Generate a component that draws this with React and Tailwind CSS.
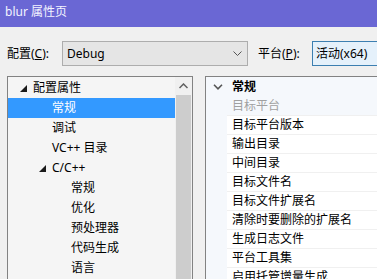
const tree = [
  { label: "配置属性", level: 0, expanded: true },
  { label: "常规", level: 1, selected: true },
  { label: "调试", level: 1 },
  { label: "VC++ 目录", level: 1 },
  { label: "C/C++", level: 1, expanded: true },
  { label: "常规", level: 2 },
  { label: "优化", level: 2 },
  { label: "预处理器", level: 2 },
  { label: "代码生成", level: 2 },
  { label: "语言", level: 2 },
]

const props = [
  "目标平台版本",
  "输出目录",
  "中间目录",
  "目标文件名",
  "目标文件扩展名",
  "清除时要删除的扩展名",
  "生成日志文件",
  "平台工具集",
  "启用托管增量生成",
]

const Expanded = () => (
  <svg width="7" height="7" viewBox="0 0 7 7">
    <polygon points="7,0 7,7 0,7" fill="#1a1a1a" />
  </svg>
)

const indent = ["pl-[12px]", "pl-[31px]", "pl-[50px]"]

const App = () => {
  return (
    <div
      className="w-[377px] h-[279px] overflow-hidden bg-[#f0f0f0] text-[12px] text-black whitespace-nowrap"
      style={{ fontFamily: '"Noto Sans", "Noto Sans CJK SC", sans-serif' }}
    >
      <div className="h-[27px] bg-[#6a67d4] pl-[5px] pt-[4px] text-[#f4f4ff] leading-[16px]">blur 属性页</div>

      <div className="mt-[14px] flex h-[25px] items-center pl-[7px]">
        <span className="w-[55px] shrink-0">配置(<u>C</u>):</span>
        <div className="flex h-[25px] w-[186px] shrink-0 items-center justify-between border border-[#adadad] bg-[#e5e5e5] pl-[4px] pr-[5px]">
          <span>Debug</span>
          <svg width="9" height="6" viewBox="0 0 9 6">
            <polyline points="0.5,0.5 4.5,4.5 8.5,0.5" fill="none" stroke="#555" strokeWidth="1" />
          </svg>
        </div>
        <span className="ml-[10px] w-[54px] shrink-0">平台(<u>P</u>):</span>
        <div className="flex h-[25px] w-[90px] shrink-0 items-center border border-[#3c7fb1] bg-[#e5f1fb] pl-[3px]">
          活动(x64)
        </div>
      </div>

      <div className="mt-[10px] flex pl-[7px]">
        <div className="flex h-[210px] w-[186px] shrink-0 border border-[#828282] bg-[#f5f5f5]">
          <div className="flex-1 pt-[1px]">
            {tree.map((item, i) => (
              <div
                key={i}
                className={`flex h-[20px] items-center ${indent[item.level]} ${item.selected ? "bg-[#3399ff] text-white" : ""}`}
              >
                <span className="flex w-[13px] shrink-0 items-center">{item.expanded && <Expanded />}</span>
                <span>{item.label}</span>
              </div>
            ))}
          </div>
          <div className="flex w-[17px] flex-col bg-[#f0f0f0]">
            <div className="flex h-[18px] items-center justify-center">
              <svg width="9" height="6" viewBox="0 0 9 6">
                <polyline points="0.5,5 4.5,1 8.5,5" fill="none" stroke="#606060" strokeWidth="1.5" />
              </svg>
            </div>
            <div className="mx-[1px] flex-1 bg-[#cdcdcd]" />
          </div>
        </div>

        <div className="ml-[12px] h-[210px] flex-1 border-l border-t border-[#828282] bg-[#f5f8fc]">
          <div className="flex h-[19px] items-center pl-[7px]">
            <svg width="10" height="6" viewBox="0 0 10 6">
              <polyline points="1,0.8 5,4.8 9,0.8" fill="none" stroke="#555" strokeWidth="1.6" />
            </svg>
            <span className="ml-[9px] font-bold">常规</span>
          </div>
          <div className="flex h-[19px] items-center pl-[26px] text-[#a0a0a0]">目标平台</div>
          {props.map((p, i) => (
            <div key={i} className="ml-[21px] flex h-[19px] items-center border-t border-[#f0f0f0] bg-white pl-[5px]">
              {p}
            </div>
          ))}
        </div>
      </div>
    </div>
  )
}

export default App
